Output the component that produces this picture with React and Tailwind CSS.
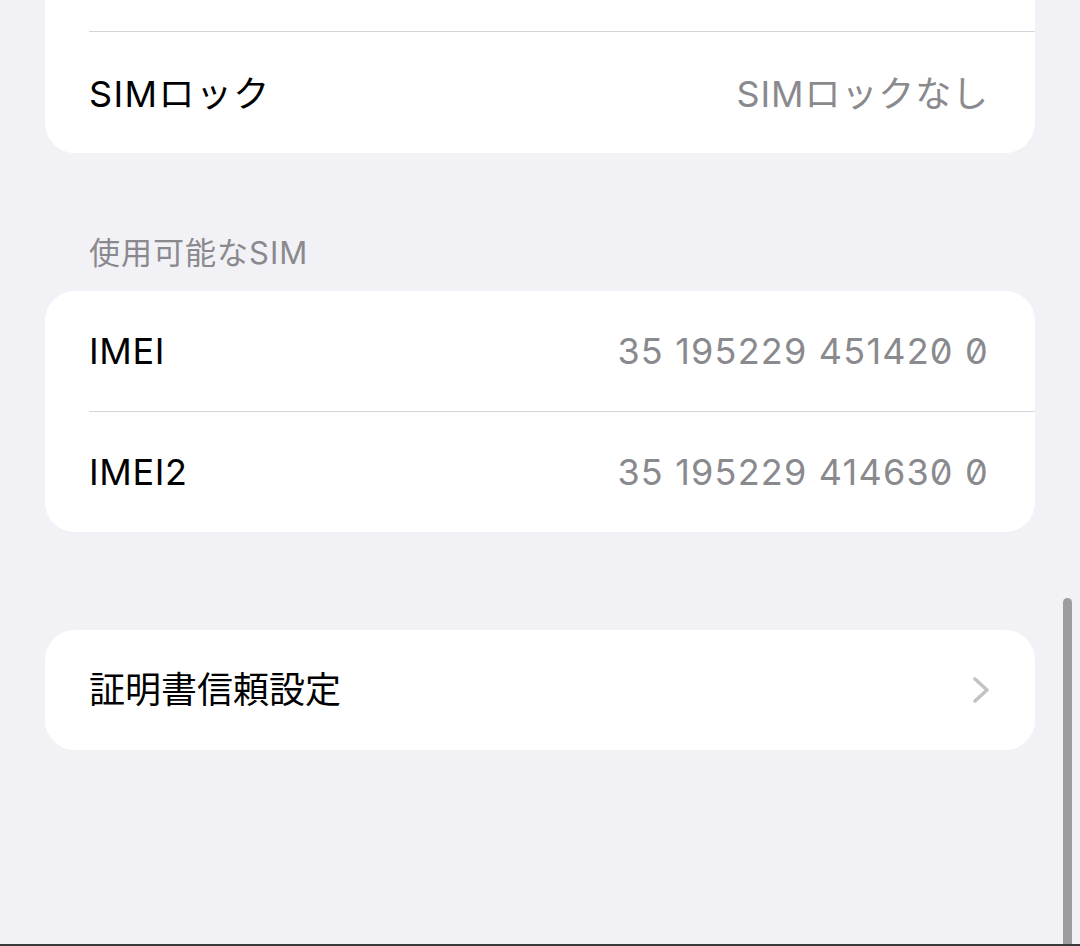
const FONT = { fontFamily: 'Inter, "Noto Sans CJK JP", sans-serif' };

function Row({ label, value, chevron, mono }) {
  return (
    <div className="flex h-[120px] items-center justify-between pl-[44px] pr-[46px]">
      <span
        className={`text-[36px] leading-none text-black ${
          chevron ? 'tracking-[0px]' : 'tracking-[0.6px]'
        }`}
      >
        {label}
      </span>
      {value && (
        <span
          className={`text-[36px] leading-none text-[#8a8a8e] ${
            mono ? 'slashed-zero tracking-[1.2px]' : 'tracking-[1px]'
          }`}
        >
          {value}
        </span>
      )}
      {chevron && (
        <svg width="18" height="28" viewBox="0 0 18 28" className="mr-[-1px]">
          <path
            d="M3 3 L15 14 L3 25"
            fill="none"
            stroke="#c4c4c7"
            strokeWidth="3.6"
            strokeLinecap="round"
            strokeLinejoin="round"
          />
        </svg>
      )}
    </div>
  );
}

function Separator() {
  return <div className="ml-[44px] h-px bg-[#d4d4d8]" />;
}

export default function App() {
  return (
    <div className="relative h-[946px] overflow-hidden bg-[#f2f1f6]" style={FONT}>
      <div className="px-[45px] pr-[45px]">
        {/* SIM lock card, scrolled partly off the top */}
        <div className="rounded-b-[30px] bg-white">
          <div className="h-[31px]" />
          <Separator />
          <div className="h-[121px] flex items-center justify-between pl-[44px] pr-[46px] pt-[3px]">
            <span className="text-[36px] leading-none text-black tracking-[1.4px]">SIMロック</span>
            <span className="text-[36px] leading-none text-[#8a8a8e] tracking-[0.9px]">SIMロックなし</span>
          </div>
        </div>

        {/* Available SIM */}
        <div className="pt-[84px] pb-[21px] pl-[44px]">
          <span className="text-[31px] leading-[32px] text-[#8a8a8e] tracking-[1px]">使用可能なSIM</span>
        </div>
        <div className="rounded-[30px] bg-white">
          <Row label="IMEI" value="35 195229 451420 0" mono />
          <Separator />
          <Row label="IMEI2" value="35 195229 414630 0" mono />
        </div>

        <div className="mt-[98px] rounded-[30px] bg-white">
          <Row label="証明書信頼設定" chevron />
        </div>
      </div>

      {/* scroll indicator */}
      <div className="absolute left-[1063px] top-[598px] bottom-0 w-[9px] rounded-t-full bg-[#9d9ca1]" />
      <div className="absolute inset-x-0 bottom-0 h-[2px] bg-[#3a3a3d]" />
    </div>
  );
}
